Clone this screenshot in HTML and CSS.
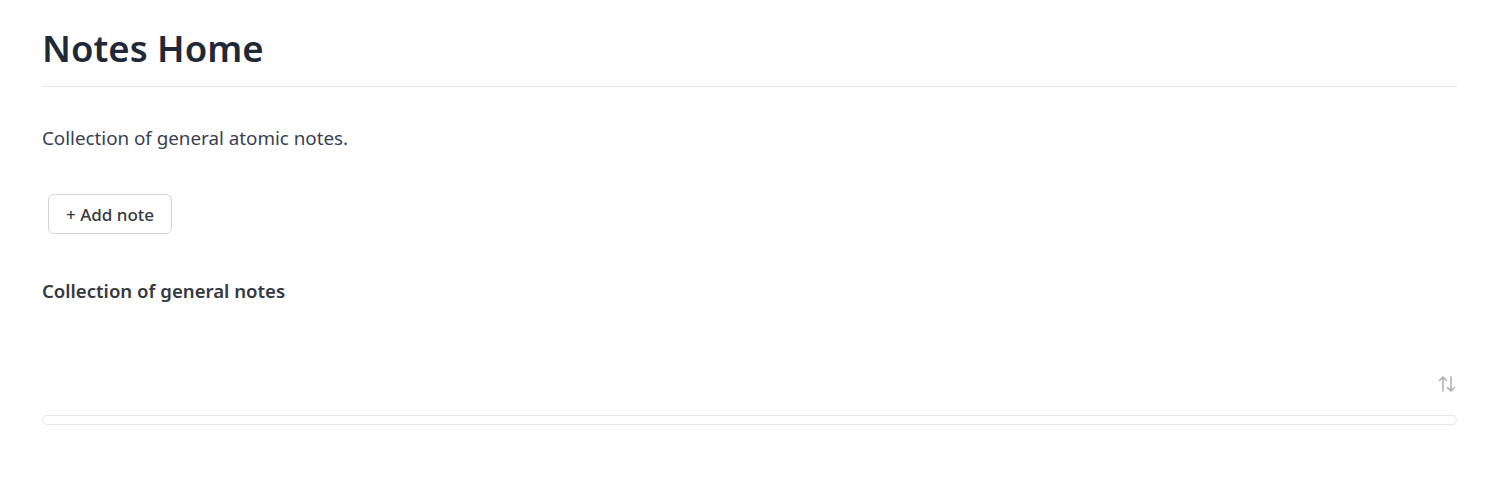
FILE: index.html
```html
<!DOCTYPE html>
<html lang="en">
<head>
  <meta charset="UTF-8" />
  <title>Notes Home</title>
  <link rel="stylesheet" href="styles.css">
</head>
<body>
  <div class="page">
    <h1 class="title">Notes Home</h1>
    <p class="lead">Collection of general atomic notes.</p>

    <div class="actions">
      <button class="btn">+ Add note</button>
    </div>

    <h2 class="section-title">Collection of general notes</h2>

    <div class="toolbar">
      <button class="sort-btn" title="Sort">
        <svg width="18" height="18" viewBox="0 0 18 18" fill="none" stroke="currentColor" stroke-width="1.5" stroke-linecap="round" stroke-linejoin="round">
          <path d="M5 16V2M1.5 5.5L5 2l3.5 3.5"/>
          <path d="M13 2v14M9.5 12.5L13 16l3.5-3.5"/>
        </svg>
      </button>
    </div>

    <div class="notes-list"></div>
  </div>
</body>
</html>
```

FILE: styles.css
```css
* {
  margin: 0;
  padding: 0;
  box-sizing: border-box;
}

body {
  font-family: 'Noto Sans', 'Open Sans', sans-serif;
  background: #fff;
  color: #343a40;
}

.page {
  margin: 0 52px 0 42px;
  padding-top: 22px;
}

.title {
  font-size: 36.5px;
  font-weight: 600;
  color: #1f2937;
  line-height: 52px;
  padding-bottom: 12px;
  border-bottom: 1px solid #e5e7eb;
}

.lead {
  font-size: 18.8px;
  color: #374151;
  margin-top: 37px;
  line-height: 28px;
}

.actions {
  margin-top: 42px;
  padding-left: 6px;
}

.btn {
  font-family: inherit;
  font-size: 17px;
  font-weight: 500;
  color: #343a40;
  background: #fff;
  border: 1px solid #ced4da;
  border-radius: 6px;
  height: 40px;
  padding: 0 17px;
  cursor: pointer;
}

.section-title {
  font-size: 18.6px;
  font-weight: 600;
  color: #343a40;
  margin-top: 43px;
  line-height: 28px;
}

.toolbar {
  display: flex;
  justify-content: flex-end;
  margin-top: 69px;
}

.sort-btn {
  background: none;
  border: none;
  color: #b0b0b0;
  width: 20px;
  height: 20px;
  display: flex;
  align-items: center;
  justify-content: center;
}

.notes-list {
  margin-top: 21px;
  height: 10px;
  border: 1px solid #e5e7eb;
  border-radius: 5px;
}
```
